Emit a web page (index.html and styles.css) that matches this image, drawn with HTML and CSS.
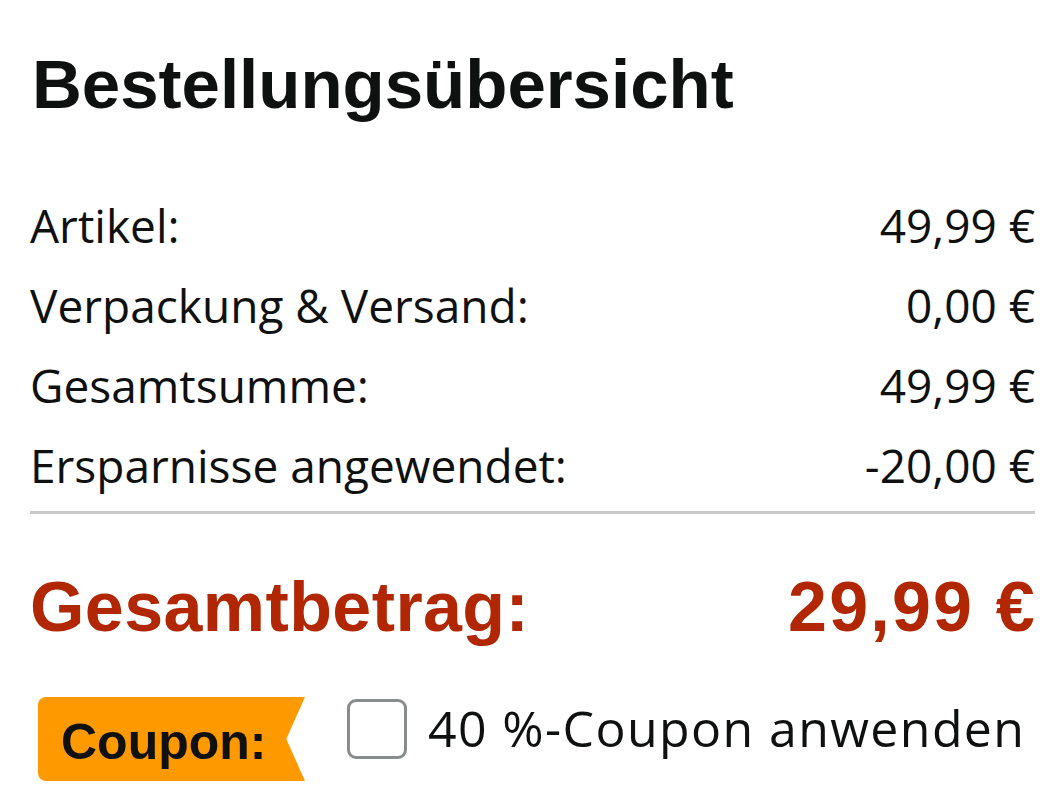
FILE: index.html
```html
<!DOCTYPE html>
<html lang="de">
<head>
<meta charset="utf-8">
<link rel="stylesheet" href="styles.css">
</head>
<body>
<div class="summary">
  <h1 class="title">Bestellungsübersicht</h1>
  <div class="rows">
    <div class="row"><span>Artikel:</span><span>49,99 €</span></div>
    <div class="row"><span>Verpackung &amp; Versand:</span><span>0,00 €</span></div>
    <div class="row"><span>Gesamtsumme:</span><span>49,99 €</span></div>
    <div class="row"><span>Ersparnisse angewendet:</span><span>-20,00 €</span></div>
  </div>
  <hr class="divider">
  <div class="total"><span>Gesamtbetrag:</span><span class="total-value">29,99 €</span></div>
  <div class="coupon">
    <span class="badge">Coupon:</span>
    <span class="check"></span>
    <span class="coupon-text">40 %-Coupon anwenden</span>
  </div>
</div>
</body>
</html>
```
FILE: styles.css
```css
html, body {
  margin: 0;
  padding: 0;
  background: #fff;
}
.summary {
  padding: 40px 25px 0 30px;
  font-family: "Liberation Sans", Arial, sans-serif;
  color: #0f1111;
}
.title {
  margin: 0 0 0 2px;
  font-size: 69px;
  line-height: 90px;
  font-weight: 700;
  letter-spacing: 0;
}
.rows {
  margin-top: 55px;
}
.row {
  display: flex;
  justify-content: space-between;
  font-family: "Open Sans", "Liberation Sans", sans-serif;
  font-size: 46px;
  line-height: 80px;
  height: 80px;
}
.divider {
  border: 0;
  border-top: 3px solid #c7c9cb;
  margin: 6px 0 0 0;
}
.total {
  display: flex;
  justify-content: space-between;
  color: #b12704;
  font-weight: 700;
  font-size: 70px;
  line-height: 90px;
  margin-top: 48px;
  letter-spacing: 0.4px;
}
.total-value {
  letter-spacing: 2.2px;
  margin-right: -2px;
}
.coupon {
  display: flex;
  align-items: center;
  margin-top: 45px;
}
.badge {
  display: inline-flex;
  align-items: center;
  box-sizing: border-box;
  width: 267px;
  height: 84px;
  margin-left: 8px;
  padding-left: 23px;
  padding-top: 6px;
  background: #ff9900;
  border-radius: 8px 0 0 8px;
  clip-path: polygon(0 0, 100% 0, 93% 50%, 100% 100%, 0 100%);
  font-weight: 700;
  font-size: 50px;
  color: #0f1111;
}
.check {
  display: inline-block;
  box-sizing: border-box;
  width: 60px;
  height: 60px;
  margin-left: 42px;
  margin-top: -20px;
  border: 3px solid #888c8c;
  border-radius: 9px;
  background: #fff;
}
.coupon-text {
  font-family: "Open Sans", "Liberation Sans", sans-serif;
  font-size: 50px;
  letter-spacing: 1.4px;
  margin-left: 21px;
  margin-top: -22px;
}
```
